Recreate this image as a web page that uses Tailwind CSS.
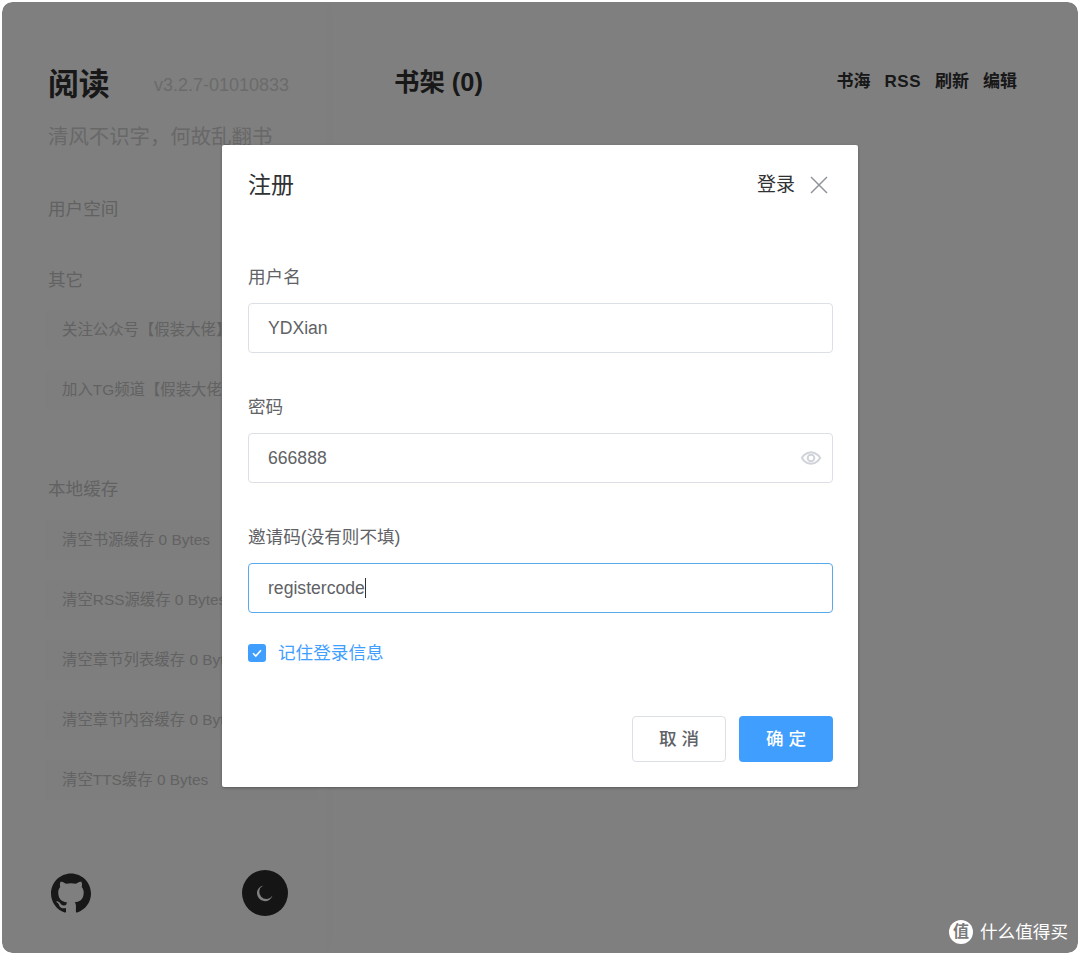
<!DOCTYPE html>
<html lang="zh-CN">
<head>
    <meta charset="UTF-8">
    <meta name="viewport" content="width=device-width, initial-scale=1.0">
    <title>阅读</title>
    <script src="https://cdn.jsdelivr.net/npm/@tailwindcss/browser@4"></script>
</head>
<body class="bg-white font-['Liberation_Sans','Noto_Sans_CJK_SC',sans-serif]">
    <div class="relative w-[1080px] h-[955px] overflow-hidden bg-white p-[2px]">
        <!-- page under the mask -->
        <div class="flex h-[951px] w-[1076px]">
            <aside class="w-[325px] h-full shrink-0 pl-[46px] pt-[62px] bg-white shadow-[0_0_16px_rgba(0,0,0,0.03)]">
                <div class="flex items-center h-[42px]">
                    <h1 class="w-[106px] text-[30.8px] leading-[42px] font-bold text-[#303133]">阅读</h1>
                    <span class="text-[18px] text-[#d6d6d6]">v3.2.7-01010833</span>
                </div>
                <p class="mt-[17px] text-[20.4px] leading-[28px] text-[#d0d0d0]">清风不识字，何故乱翻书</p>
                <h2 class="mt-[46px] text-[17.6px] leading-[24px] text-[#c4c4c4]">用户空间</h2>
                <h2 class="mt-[47px] text-[17.6px] leading-[24px] text-[#c4c4c4]">其它</h2>
                <ul class="mt-[18px] -ml-[3px] flex flex-col gap-[20px] text-[15.4px] leading-[40px] text-[#c4c4c4]">
                    <li class="w-[273px] h-[40px] pl-[17px] whitespace-nowrap overflow-hidden bg-[#fdfdfd] rounded">关注公众号【假装大佬】</li>
                    <li class="w-[273px] h-[40px] pl-[17px] whitespace-nowrap overflow-hidden bg-[#fdfdfd] rounded">加入TG频道【假装大佬】</li>
                </ul>
                <h2 class="mt-[67px] text-[17.6px] leading-[24px] text-[#c4c4c4]">本地缓存</h2>
                <ul class="mt-[19px] -ml-[3px] flex flex-col gap-[20px] text-[15.4px] leading-[40px] text-[#c4c4c4]">
                    <li class="w-[273px] h-[40px] pl-[17px] whitespace-nowrap overflow-hidden bg-[#fdfdfd] rounded">清空书源缓存 0 Bytes</li>
                    <li class="w-[273px] h-[40px] pl-[17px] whitespace-nowrap overflow-hidden bg-[#fdfdfd] rounded">清空RSS源缓存 0 Bytes</li>
                    <li class="w-[273px] h-[40px] pl-[17px] whitespace-nowrap overflow-hidden bg-[#fdfdfd] rounded">清空章节列表缓存 0 Bytes</li>
                    <li class="w-[273px] h-[40px] pl-[17px] whitespace-nowrap overflow-hidden bg-[#fdfdfd] rounded">清空章节内容缓存 0 Bytes</li>
                    <li class="w-[273px] h-[40px] pl-[17px] whitespace-nowrap overflow-hidden bg-[#fdfdfd] rounded">清空TTS缓存 0 Bytes</li>
                </ul>
                <div class="mt-[70px] flex items-center">
                    <svg class="w-[40px] h-[40px] ml-[3px] text-[#303133]" viewBox="0 0 24 24" fill="currentColor"><path d="M12 .297c-6.63 0-12 5.373-12 12 0 5.303 3.438 9.8 8.205 11.385.6.113.82-.258.82-.577 0-.285-.01-1.04-.015-2.04-3.338.724-4.042-1.61-4.042-1.61C4.422 18.07 3.633 17.7 3.633 17.7c-1.087-.744.084-.729.084-.729 1.205.084 1.838 1.236 1.838 1.236 1.07 1.835 2.809 1.305 3.495.998.108-.776.417-1.305.76-1.605-2.665-.3-5.466-1.332-5.466-5.93 0-1.31.465-2.38 1.235-3.22-.135-.303-.54-1.523.105-3.176 0 0 1.005-.322 3.3 1.23.96-.267 1.98-.399 3-.405 1.02.006 2.04.138 3 .405 2.28-1.552 3.285-1.23 3.285-1.23.645 1.653.24 2.873.12 3.176.765.84 1.23 1.91 1.23 3.22 0 4.61-2.805 5.625-5.475 5.92.42.36.81 1.096.81 2.22 0 1.606-.015 2.896-.015 3.286 0 .315.21.69.825.57C20.565 22.092 24 17.592 24 12.297c0-6.627-5.373-12-12-12"/></svg>
                    <div class="ml-[151px] w-[46px] h-[46px] rounded-full bg-[#2a2a2a] flex items-center justify-center">
                        <svg class="w-[20px] h-[20px] text-white" viewBox="0 0 24 24" fill="currentColor"><path d="M10 3A9.5 9.5 0 1 0 21 15 8.5 8.5 0 1 1 10 3z"/></svg>
                    </div>
                </div>
            </aside>
            <main class="flex-1 pl-[67px] pr-[61px] pt-[62px]">
                <div class="flex items-center justify-between h-[36px]">
                    <h2 class="text-[25.4px] font-bold text-[#303133]">书架 (0)</h2>
                    <div class="flex gap-[14px] text-[17px] font-bold text-[#303133]">
                        <span>书海</span>
                        <span class="tracking-[0.5px]">RSS</span>
                        <span>刷新</span>
                        <span>编辑</span>
                    </div>
                </div>
            </main>
        </div>

        <!-- mask -->
        <div class="absolute inset-[2px] rounded-[10px] bg-black/50 outline-[3px] outline-white flex justify-center pt-[143px]">
            <div class="w-[636px] h-[642px] bg-white rounded-[2px] shadow-[0_1px_3px_rgba(0,0,0,0.3)] pl-[26px] pr-[25px] pt-[24px]">
                <div class="flex items-center justify-between h-[32px]">
                    <span class="text-[23px] text-[#303133]">注册</span>
                    <div class="flex items-center">
                        <span class="text-[19px] text-[#303133]">登录</span>
                        <svg class="w-[20px] h-[20px] ml-[14px] mr-[4px] text-[#909399]" viewBox="0 0 20 20" fill="none" stroke="currentColor" stroke-width="1.5"><path d="M2 2l16 16M18 2L2 18"/></svg>
                    </div>
                </div>

                <label class="block mt-[64px] text-[17.6px] leading-[24px] text-[#606266]">用户名</label>
                <div class="mt-[14px] h-[50px] border border-[#dcdfe6] rounded px-[19px] text-[17.6px] leading-[48px] text-[#606266]">YDXian</div>

                <label class="block mt-[42px] text-[17.6px] leading-[24px] text-[#606266]">密码</label>
                <div class="mt-[14px] h-[50px] border border-[#dcdfe6] rounded pl-[19px] pr-[11px] flex items-center justify-between text-[17.6px] text-[#606266]">
                    <span>666888</span>
                    <svg class="w-[20px] h-[20px] text-[#d0d3d9]" viewBox="0 0 24 24" fill="none" stroke="currentColor" stroke-width="2.4"><path d="M1 12s4-7 11-7 11 7 11 7-4 7-11 7-11-7-11-7z"/><circle cx="12" cy="12" r="4"/></svg>
                </div>

                <label class="block mt-[42px] text-[17.6px] leading-[24px] text-[#606266]">邀请码(没有则不填)</label>
                <div class="mt-[14px] h-[50px] border border-[#5aa9ea] rounded px-[19px] flex items-center text-[17.6px] text-[#606266]">
                    <span>registercode</span><span class="w-px h-[20px] bg-[#303133]"></span>
                </div>

                <div class="mt-[31px] flex items-center h-[18px]">
                    <span class="w-[18px] h-[18px] rounded-[3px] bg-[#409eff] flex items-center justify-center">
                        <svg class="w-[12px] h-[12px] text-white" viewBox="0 0 12 12" fill="none" stroke="currentColor" stroke-width="1.6"><path d="M2 6.2l2.8 2.8L10 3.2"/></svg>
                    </span>
                    <span class="ml-[12px] text-[17.6px] text-[#409eff]">记住登录信息</span>
                </div>

                <div class="mt-[54px] flex justify-end gap-[13px]">
                    <button class="w-[94px] h-[46px] border border-[#dcdfe6] rounded text-[17.6px] font-medium text-[#606266] bg-white">取 消</button>
                    <button class="w-[94px] h-[46px] rounded text-[17.6px] font-medium text-white bg-[#409eff]">确 定</button>
                </div>
            </div>
        </div>

        <!-- site watermark -->
        <div class="absolute right-[12px] bottom-[11px] flex items-center gap-[7px] text-white">
            <span class="w-[24px] h-[24px] rounded-full bg-white text-[#7a7a7a] text-[16px] font-bold leading-[24px] text-center">值</span>
            <span class="text-[17.6px] leading-[24px]">什么值得买</span>
        </div>
    </div>
</body>
</html>
